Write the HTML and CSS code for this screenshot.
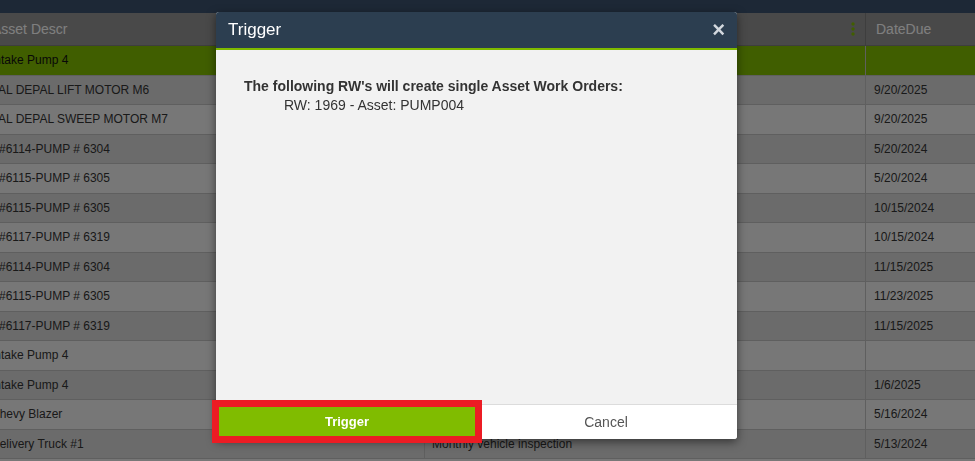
FILE: index.html
```html
<!DOCTYPE html>
<html lang="en">
<head>
    <meta charset="UTF-8">
    <meta name="viewport" content="width=device-width, initial-scale=1.0">
    <title>Recurring Work - Trigger</title>
    <link rel="stylesheet" href="styles.css">
</head>
<body>
    <div class="topbar"></div>

    <div class="grid-wrap">
        <div class="grid">
            <div class="grid-head">
                <div class="cell col-asset">Asset Descr</div>
                <div class="cell col-task">
                    <span></span>
                    <svg class="kebab" width="4" height="14" viewBox="0 0 4 14">
                        <circle cx="2" cy="2" r="1.7"/>
                        <circle cx="2" cy="7" r="1.7"/>
                        <circle cx="2" cy="12" r="1.7"/>
                    </svg>
                </div>
                <div class="cell col-date">DateDue</div>
            </div>

            <div class="row selected">
                <div class="cell col-asset">Intake Pump 4</div>
                <div class="cell col-task"></div>
                <div class="cell col-date"></div>
            </div>
            <div class="row">
                <div class="cell col-asset">PAL DEPAL LIFT MOTOR M6</div>
                <div class="cell col-task"></div>
                <div class="cell col-date">9/20/2025</div>
            </div>
            <div class="row">
                <div class="cell col-asset">PAL DEPAL SWEEP MOTOR M7</div>
                <div class="cell col-task"></div>
                <div class="cell col-date">9/20/2025</div>
            </div>
            <div class="row">
                <div class="cell col-asset">P#6114-PUMP # 6304</div>
                <div class="cell col-task"></div>
                <div class="cell col-date">5/20/2024</div>
            </div>
            <div class="row">
                <div class="cell col-asset">P#6115-PUMP # 6305</div>
                <div class="cell col-task"></div>
                <div class="cell col-date">5/20/2024</div>
            </div>
            <div class="row">
                <div class="cell col-asset">P#6115-PUMP # 6305</div>
                <div class="cell col-task"></div>
                <div class="cell col-date">10/15/2024</div>
            </div>
            <div class="row">
                <div class="cell col-asset">P#6117-PUMP # 6319</div>
                <div class="cell col-task"></div>
                <div class="cell col-date">10/15/2024</div>
            </div>
            <div class="row">
                <div class="cell col-asset">P#6114-PUMP # 6304</div>
                <div class="cell col-task"></div>
                <div class="cell col-date">11/15/2025</div>
            </div>
            <div class="row">
                <div class="cell col-asset">P#6115-PUMP # 6305</div>
                <div class="cell col-task"></div>
                <div class="cell col-date">11/23/2025</div>
            </div>
            <div class="row">
                <div class="cell col-asset">P#6117-PUMP # 6319</div>
                <div class="cell col-task"></div>
                <div class="cell col-date">11/15/2025</div>
            </div>
            <div class="row">
                <div class="cell col-asset">Intake Pump 4</div>
                <div class="cell col-task"></div>
                <div class="cell col-date"></div>
            </div>
            <div class="row">
                <div class="cell col-asset">Intake Pump 4</div>
                <div class="cell col-task"></div>
                <div class="cell col-date">1/6/2025</div>
            </div>
            <div class="row">
                <div class="cell col-asset">Chevy Blazer</div>
                <div class="cell col-task"></div>
                <div class="cell col-date">5/16/2024</div>
            </div>
            <div class="row">
                <div class="cell col-asset">Delivery Truck #1</div>
                <div class="cell col-task">Monthly vehicle inspection</div>
                <div class="cell col-date">5/13/2024</div>
            </div>
        </div>
    </div>

    <!-- modal backdrop -->
    <div class="overlay"></div>

    <div class="modal">
        <div class="modal-header">
            <h2>Trigger</h2>
            <span class="close">&times;</span>
        </div>
        <div class="modal-body">
            <p class="lead">The following RW's will create single Asset Work Orders:</p>
            <p class="item">RW: 1969 - Asset: PUMP004</p>
        </div>
        <div class="modal-footer">
            <button class="btn-trigger">Trigger</button>
            <button class="btn-cancel">Cancel</button>
        </div>
    </div>
</body>
</html>
```

FILE: styles.css
```css
body {
    font-family: "Liberation Sans", Arial, sans-serif;
    margin: 0;
    padding: 0;
    background-color: #eeeeee;
    overflow: hidden;
}

.topbar {
    height: 13px;
    background-color: #3b516d;
}

.grid-wrap {
    overflow: hidden;
}

.grid {
    margin-left: -20px;
    width: 1010px;
}

.grid-head, .row {
    display: grid;
    grid-template-columns: 445px 441px 1fr;
}

.grid-head {
    height: 33px;
    background-color: #939393;
    border-bottom: 1px solid #7c7c7c;
    box-sizing: border-box;
    color: #ffffff;
    font-size: 14px;
}

.grid-head .cell {
    padding: 0 10px 0 12px;
    display: flex;
    align-items: center;
    border-right: 1px solid #7c7c7c;
}

.grid-head .col-task {
    justify-content: space-between;
}

.grid-head .col-date {
    padding-left: 10px;
}

.kebab {
    fill: #80bc00;
}

.row {
    height: 29.5px;
    box-sizing: border-box;
    border-bottom: 1px solid #bebebe;
    background-color: #eeeeee;
    color: #333333;
    font-size: 12px;
}

.row:nth-child(odd) {
    background-color: #d6d6d6;
}

.row.selected {
    background-color: #80bc00;
    color: #111;
}

.row .cell {
    padding: 0 9px;
    display: flex;
    align-items: center;
    border-right: 1px solid #bebebe;
    white-space: nowrap;
    overflow: hidden;
}

.row .col-asset {
    padding-left: 11px;
}

.row .col-task {
    padding-left: 7px;
}

.row .col-date {
    padding-left: 8px;
}

.overlay {
    position: fixed;
    top: 0;
    left: 0;
    right: 0;
    bottom: 0;
    background-color: rgba(0, 0, 0, 0.5);
}

.modal {
    position: absolute;
    left: 216px;
    top: 12px;
    width: 521px;
    height: 427px;
    display: flex;
    flex-direction: column;
    background-color: #f2f2f2;
    border-radius: 3px;
    box-shadow: 0 3px 10px rgba(0, 0, 0, 0.5);
}

.modal-header {
    height: 36px;
    background-color: #2c3e50;
    border-bottom: 2px solid #7fba00;
    border-radius: 3px 3px 0 0;
    display: flex;
    align-items: center;
    justify-content: space-between;
    padding: 0 12px;
}

.modal-header h2 {
    margin: 0;
    color: #ffffff;
    font-size: 17px;
    font-weight: normal;
}

.close {
    color: #d3d8de;
    font-size: 22px;
    font-weight: bold;
    line-height: 1;
    cursor: pointer;
}

.modal-body {
    flex: 1;
    padding: 27px 28px 0;
    font-size: 14px;
    color: #333;
}

.modal-body p {
    margin: 0;
    line-height: 19px;
}

.modal-body .lead {
    font-weight: bold;
}

.modal-body .item {
    padding-left: 40px;
}

.modal-footer {
    height: 35px;
    box-sizing: border-box;
    border-top: 1px solid #dcdcdc;
    background-color: #ffffff;
    border-radius: 0 0 3px 3px;
    display: flex;
    padding: 2px 0 3px 3px;
}

.modal-footer button {
    font-family: "Liberation Sans", Arial, sans-serif;
    border: none;
    cursor: pointer;
}

.btn-trigger {
    width: 256px;
    background-color: #80bc00;
    color: #ffffff;
    font-size: 13px;
    font-weight: bold;
    outline: 7px solid #ec1c24;
}

.btn-cancel {
    flex: 1;
    background-color: transparent;
    color: #555;
    font-size: 14px;
}
```
